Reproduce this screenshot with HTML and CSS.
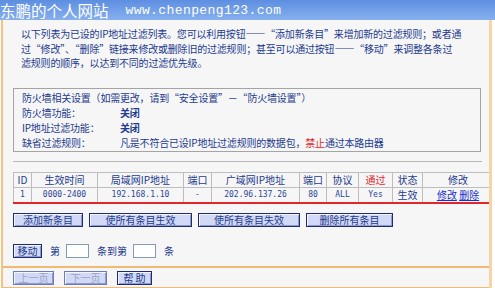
FILE: index.html
```html
<!DOCTYPE html>
<html lang="zh-CN">
<head>
  <meta charset="UTF-8" />
  <title>IP地址过滤</title>
  <link rel="stylesheet" href="styles.css">
</head>
<body>
  <div class="banner">
    <span class="site">东鹏的个人网站</span>
    <span class="url">www.chenpeng123.com</span>
  </div>

  <div class="page">
    <p class="intro">
      以下列表为已设的IP地址过滤列表。您可以利用按钮——“添加新条目”来增加新的过滤规则；或者通<br>
      过“修改”、“删除”链接来修改或删除旧的过滤规则；甚至可以通过按钮——“移动”来调整各条过<br>
      滤规则的顺序，以达到不同的过滤优先级。
    </p>

    <div class="panel">
      <div class="panel-row">防火墙相关设置（如需更改，请到“安全设置”－“防火墙设置”）</div>
      <div class="panel-row"><span class="panel-label">防火墙功能：</span><b>关闭</b></div>
      <div class="panel-row"><span class="panel-label">IP地址过滤功能：</span><b>关闭</b></div>
      <div class="panel-row"><span class="panel-label">缺省过滤规则：</span>凡是不符合已设IP地址过滤规则的数据包，<span class="deny">禁止</span>通过本路由器</div>
    </div>

    <div class="rule"></div>

    <table class="list">
      <thead>
        <tr>
          <th class="c-id">ID</th>
          <th class="c-time">生效时间</th>
          <th class="c-lan">局域网IP地址</th>
          <th class="c-port">端口</th>
          <th class="c-wan">广域网IP地址</th>
          <th class="c-port2">端口</th>
          <th class="c-proto">协议</th>
          <th class="c-pass deny">通过</th>
          <th class="c-state">状态</th>
          <th class="c-edit">修改</th>
        </tr>
      </thead>
      <tbody>
        <tr>
          <td class="mono">1</td>
          <td class="mono">0000-2400</td>
          <td class="mono">192.168.1.10</td>
          <td class="mono">-</td>
          <td class="mono">202.96.137.26</td>
          <td class="mono">80</td>
          <td class="mono">ALL</td>
          <td class="mono">Yes</td>
          <td>生效</td>
          <td><a href="#">修改</a> <a href="#">删除</a></td>
        </tr>
      </tbody>
    </table>

    <div class="actions">
      <button class="btn w-add">添加新条目</button>
      <button class="btn w-on">使所有条目生效</button>
      <button class="btn w-off">使所有条目失效</button>
      <button class="btn w-del">删除所有条目</button>
    </div>

    <div class="move">
      <button class="btn w-move">移动</button>
      <span class="move-text">第</span>
      <input class="box" type="text">
      <span class="move-text">条到第</span>
      <input class="box" type="text">
      <span class="move-text">条</span>
    </div>

    <div class="line"></div>

    <div class="pager">
      <button class="btn w-prev" disabled>上一页</button>
      <button class="btn w-next" disabled>下一页</button>
      <button class="btn w-help">帮 助</button>
    </div>

    <div class="line"></div>
  </div>
</body>
</html>
```

FILE: styles.css
```css
body {
  margin: 0;
  background-color: #ffffff;
  color: #1d3b8f;
  font-family: "Noto Sans CJK SC", "Noto Sans", sans-serif;
  font-size: 10px;
}
.banner {
  height: 20px;
  background: linear-gradient(#5d8ee0, #86b0ee);
  color: #ffffff;
  display: flex;
  align-items: center;
  white-space: nowrap;
}
.site {
  font-size: 15.5px;
  line-height: 20px;
}
.url {
  margin-left: 17px;
  font-family: "Liberation Mono", monospace;
  font-size: 13px;
  letter-spacing: 0.4px;
}
.page {
  width: 486px;
  margin-left: 1px;
  border-left: 2px solid #f6c284;
  border-right: 3px solid #f9d3a8;
  background-color: #f6f6f6;
  overflow: hidden;
}
.intro {
  margin: 0;
  padding: 7px 0 0 18px;
  line-height: 14.5px;
  letter-spacing: -0.2px;
  white-space: nowrap;
}
.panel {
  margin: 17px 8px 0 10px;
  border: 1px solid #a4a4a4;
  padding: 1px 0 1px 8px;
}
.panel-row {
  line-height: 15px;
  letter-spacing: -0.2px;
  white-space: nowrap;
}
.panel-label {
  display: inline-block;
  width: 98px;
}
.panel b {
  font-weight: bold;
}
.deny {
  color: #e3262a;
}
.rule {
  height: 1px;
  margin: 9px 7px 0 10px;
  background-color: #b9b9b9;
}
.list {
  margin: 10px 0 0 10px;
  width: 470px;
  border-collapse: collapse;
  border-bottom: 2px solid #e3262a;
  table-layout: fixed;
}
.list th, .list td {
  height: 14px;
  padding: 0;
  border: 1px solid #bdbdbd;
  text-align: center;
  font-weight: normal;
  line-height: 13px;
  white-space: nowrap;
}
.list tbody td {
  border-bottom: none;
}
.c-id { width: 17px; }
.c-time { width: 65px; }
.c-lan { width: 85px; }
.c-port { width: 27px; }
.c-wan { width: 87px; }
.c-port2 { width: 26px; }
.c-proto { width: 31px; }
.c-pass { width: 33px; }
.c-state { width: 29px; }
.c-edit { width: 70px; }
.mono {
  font-family: "DejaVu Sans Mono", monospace;
  font-size: 8px;
  color: #2a4596;
}
.list a {
  color: #1b2fd0;
  text-decoration: underline;
}
.btn {
  height: 14px;
  padding: 0;
  border: 1px solid #1f2c6e;
  background-color: #d2d9f6;
  color: #1d3b8f;
  font-family: "Noto Sans CJK SC", sans-serif;
  font-size: 10px;
  line-height: 12px;
  box-shadow: inset 1px 1px 0 #f4f6ff, inset -1px -1px 0 #8e9ad0;
}
.btn:disabled {
  color: #97a3c8;
  border-color: #6d7cb3;
}
.actions {
  display: flex;
  gap: 6px;
  margin: 9px 0 0 10px;
}
.w-add { width: 70px; }
.w-on { width: 103px; }
.w-off { width: 102px; }
.w-del { width: 87px; }
.move {
  display: flex;
  align-items: center;
  margin: 17px 0 0 10px;
  height: 14px;
}
.w-move { width: 29px; }
.move-text {
  margin: 0 6px 0 8px;
}
.box {
  width: 21px;
  height: 12px;
  padding: 0;
  border: 1px solid #7f9db9;
  background-color: #ffffff;
}
.line {
  height: 2px;
  margin-top: 8px;
  background-color: #f3b872;
}
.pager {
  display: flex;
  gap: 10px;
  margin: 3px 0 0 10px;
}
.pager + .line {
  margin-top: 2px;
}
.w-prev { width: 41px; }
.w-next { width: 43px; }
.w-help { width: 35px; }
```
